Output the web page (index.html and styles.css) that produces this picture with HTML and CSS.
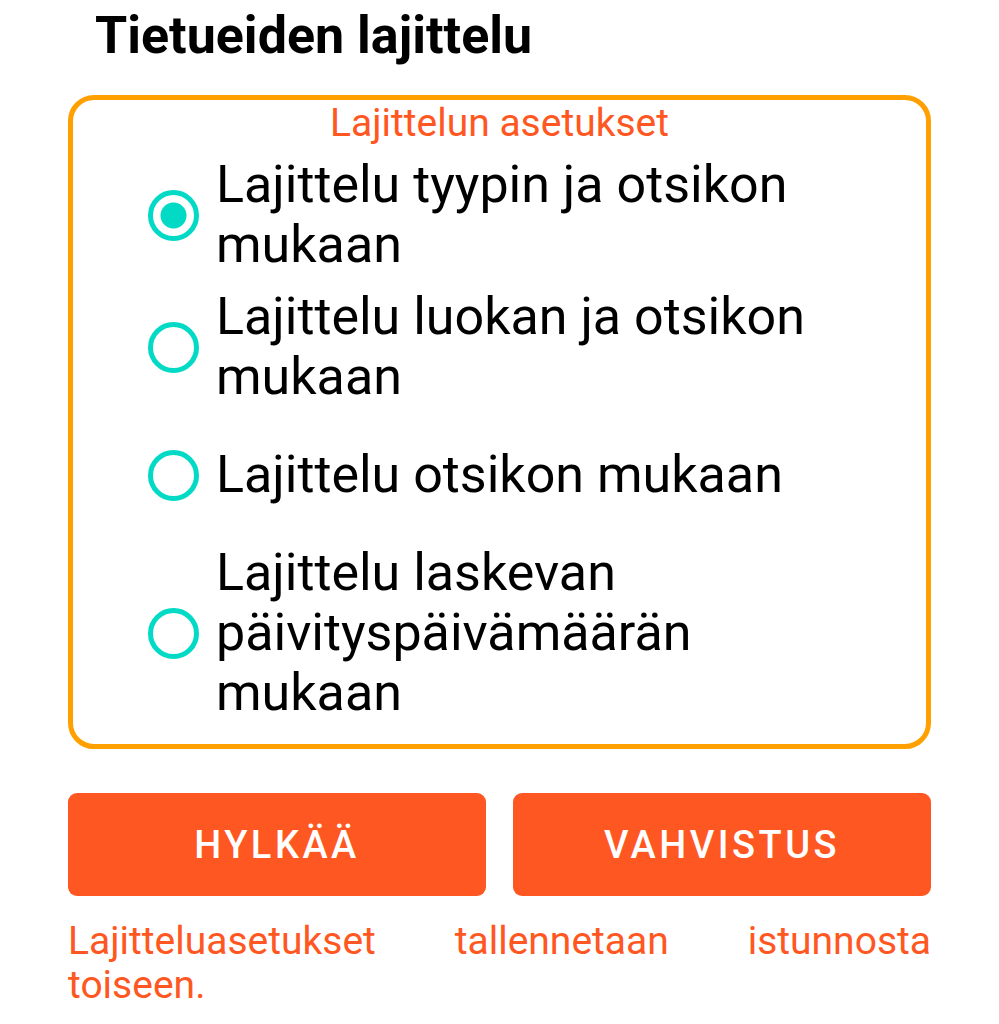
FILE: index.html
```html
<!DOCTYPE html>
<html lang="fi">
<head>
    <meta charset="UTF-8">
    <meta name="viewport" content="width=device-width, initial-scale=1.0">
    <title>Tietueiden lajittelu</title>
    <link rel="stylesheet" href="styles.css">
</head>
<body>

    <div class="page">
        <h1 class="title">Tietueiden lajittelu</h1>

        <!-- Sort options -->
        <div class="sort-box">
            <div class="sort-legend">Lajittelun asetukset</div>
            <div class="options">
                <label class="option">
                    <input type="radio" name="sort" value="type" checked>
                    <span class="option-text">Lajittelu tyypin ja otsikon mukaan</span>
                </label>
                <label class="option">
                    <input type="radio" name="sort" value="class">
                    <span class="option-text">Lajittelu luokan ja otsikon mukaan</span>
                </label>
                <label class="option">
                    <input type="radio" name="sort" value="title">
                    <span class="option-text">Lajittelu otsikon mukaan</span>
                </label>
                <label class="option">
                    <input type="radio" name="sort" value="date">
                    <span class="option-text">Lajittelu laskevan päivityspäivämäärän mukaan</span>
                </label>
            </div>
        </div>

        <div class="actions">
            <button class="btn" id="cancel-btn">Hylkää</button>
            <button class="btn" id="confirm-btn">Vahvistus</button>
        </div>

        <p class="note">Lajitteluasetukset tallennetaan istunnosta toiseen.</p>
    </div>

</body>
</html>
```

FILE: styles.css
```css
body, html {
    margin: 0;
    padding: 0;
    font-family: Roboto, "Liberation Sans", sans-serif;
    background-color: #fff;
    color: #000;
}
.page {
    width: 863px;
    padding: 5px 0 0 68px;
}
.title {
    margin: 0 0 0 27px;
    font-size: 52px;
    line-height: 61px;
    font-weight: 700;
}
.sort-box {
    margin-top: 29px;
    border: 5px solid #ffa000;
    border-radius: 26px;
    padding-bottom: 15px;
}
.sort-legend {
    text-align: center;
    font-size: 39px;
    line-height: 46px;
    color: #ff5722;
}
.options {
    margin-top: 3px;
    padding-left: 75px;
    padding-right: 100px;
}
.option {
    display: flex;
    align-items: center;
    box-sizing: border-box;
    min-height: 124px;
    padding: 6px 0;
}
.option input {
    appearance: none;
    -webkit-appearance: none;
    box-sizing: border-box;
    flex-shrink: 0;
    width: 51px;
    height: 51px;
    margin: 0 17px 0 0;
    border: 5px solid #03dac5;
    border-radius: 50%;
    background: transparent;
}
.option input:checked {
    background: radial-gradient(circle, #03dac5 0 12.5px, transparent 13.5px);
}
.option-text {
    font-size: 52px;
    line-height: 60px;
}
.actions {
    display: flex;
    gap: 27px;
    margin-top: 44px;
}
.btn {
    flex: 1;
    height: 103px;
    border: none;
    border-radius: 9px;
    background-color: #ff5722;
    color: white;
    font-family: Roboto, "Liberation Sans", sans-serif;
    font-size: 38px;
    font-weight: 500;
    letter-spacing: 3.5px;
    text-transform: uppercase;
}
.note {
    margin: 23px 0 0;
    font-size: 39px;
    line-height: 44px;
    text-align: justify;
    color: #ff5722;
}
```
